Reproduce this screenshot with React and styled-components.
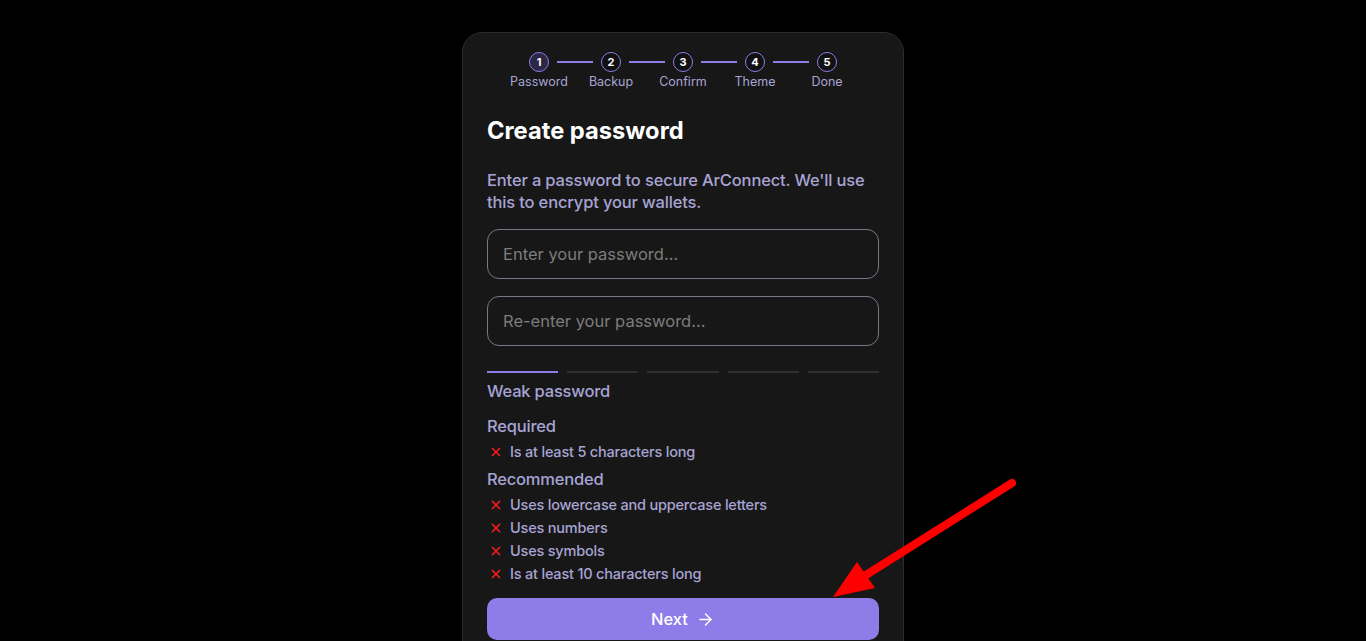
import React from "react";
import styled, { createGlobalStyle } from "styled-components";
import { ArrowRight } from "lucide-react";

const GlobalStyle = createGlobalStyle`
  html, body {
    margin: 0;
    padding: 0;
    background: #000;
  }
  body {
    font-family: Inter, "Noto Sans", sans-serif;
  }
`;

const Page = styled.div`
  position: relative;
  width: 100vw;
  min-height: 855px;
  padding-top: 32px;
  box-sizing: border-box;
  display: flex;
  justify-content: center;
  align-items: flex-start;
`;

const Card = styled.div`
  width: 442px;
  box-sizing: border-box;
  background: #171717;
  border: 1px solid #2c2c2c;
  border-radius: 20px;
  padding: 19px 24px 140px;
  display: flex;
  flex-direction: column;
`;

const Steps = styled.div`
  display: flex;
  flex-direction: column;
  align-items: center;
`;

const StepRow = styled.div`
  display: flex;
  align-items: center;
`;

const Circle = styled.div`
  width: 20px;
  height: 20px;
  box-sizing: border-box;
  border-radius: 50%;
  border: 1.5px solid #8e7de8;
  background: ${({ $active }) => ($active ? "#2c2744" : "#111")};
  color: #fff;
  font-size: 11px;
  font-weight: 700;
  display: flex;
  align-items: center;
  justify-content: center;
`;

const StepLine = styled.div`
  width: 36px;
  height: 2px;
  margin: 0 8px;
  background: #8e7de8;
`;

const Labels = styled.div`
  display: grid;
  grid-template-columns: repeat(5, 72px);
  margin-top: 2px;
`;

const Label = styled.span`
  text-align: center;
  font-size: 12.5px;
  line-height: 16px;
  color: #a7a4d4;
`;

const Title = styled.h1`
  margin: 26px 0 0;
  font-size: 23.7px;
  line-height: 30px;
  font-weight: 700;
  color: #fff;
`;

const Lead = styled.p`
  margin: 23px 0 0;
  font-size: 16.5px;
  line-height: 22px;
  letter-spacing: -0.15px;
  font-weight: 500;
  color: #a7a4d4;
`;

const Input = styled.input`
  display: block;
  width: 100%;
  height: 50px;
  box-sizing: border-box;
  margin-top: ${({ $gap }) => $gap}px;
  padding: 0 15px;
  border: 1px solid #7a7787;
  border-radius: 12px;
  background: transparent;
  font-family: inherit;
  font-size: 16.5px;
  color: #fff;
  outline: none;
  &::placeholder {
    color: #7c7c7c;
  }
`;

const Bars = styled.div`
  display: grid;
  grid-template-columns: repeat(5, 1fr);
  gap: 9px;
  margin-top: 25px;
`;

const Bar = styled.div`
  height: 2px;
  background: ${({ $on }) => ($on ? "#8e7de8" : "#2f2f2f")};
`;

const Heading = styled.div`
  margin-top: ${({ $gap }) => $gap}px;
  font-size: 16.5px;
  line-height: 22px;
  letter-spacing: -0.2px;
  font-weight: 500;
  color: #a7a4d4;
`;

const Checks = styled.ul`
  list-style: none;
  margin: 5px 0 0;
  padding: 0;
  display: flex;
  flex-direction: column;
  gap: 3px;
`;

const Check = styled.li`
  display: flex;
  align-items: center;
  gap: 8px;
  padding-left: 3px;
  font-size: 14.5px;
  line-height: 20px;
  letter-spacing: -0.2px;
  font-weight: 500;
  color: #a7a4d4;
`;

const Button = styled.button`
  margin-top: 14px;
  height: 42px;
  border: none;
  border-radius: 10px;
  background: #8e7de8;
  color: #fff;
  font-family: inherit;
  font-size: 16.5px;
  font-weight: 500;
  display: flex;
  align-items: center;
  justify-content: center;
  gap: 8px;
  cursor: pointer;
`;

const Annotation = styled.svg`
  position: absolute;
  left: 0;
  top: 0;
  pointer-events: none;
`;

const Cross = () => (
  <svg width="12" height="12" viewBox="0 0 12 12">
    <path d="M2 2 L10 10 M10 2 L2 10" stroke="#ff1a1a" strokeWidth="1.6" />
  </svg>
);

const steps = ["Password", "Backup", "Confirm", "Theme", "Done"];
const required = ["Is at least 5 characters long"];
const recommended = [
  "Uses lowercase and uppercase letters",
  "Uses numbers",
  "Uses symbols",
  "Is at least 10 characters long",
];

const App = () => {
  return (
    <>
      <GlobalStyle />
      <Page>
        <Card>
          <Steps>
            <StepRow>
              {steps.map((s, i) => (
                <React.Fragment key={s}>
                  <Circle $active={i === 0}>{i + 1}</Circle>
                  {i < steps.length - 1 && <StepLine />}
                </React.Fragment>
              ))}
            </StepRow>
            <Labels>
              {steps.map((s) => (
                <Label key={s}>{s}</Label>
              ))}
            </Labels>
          </Steps>

          <Title>Create password</Title>
          <Lead>
            Enter a password to secure ArConnect. We'll use this to encrypt
            your wallets.
          </Lead>

          <Input type="password" placeholder="Enter your password..." $gap={16} />
          <Input type="password" placeholder="Re-enter your password..." $gap={17} />

          <Bars>
            {[0, 1, 2, 3, 4].map((n) => (
              <Bar key={n} $on={n === 0} />
            ))}
          </Bars>

          <Heading $gap={7}>Weak password</Heading>
          <Heading $gap={13}>Required</Heading>
          <Checks>
            {required.map((r) => (
              <Check key={r}>
                <Cross />
                {r}
              </Check>
            ))}
          </Checks>
          <Heading $gap={6}>Recommended</Heading>
          <Checks>
            {recommended.map((r) => (
              <Check key={r}>
                <Cross />
                {r}
              </Check>
            ))}
          </Checks>

          <Button>
            Next <ArrowRight size={19} strokeWidth={1.8} />
          </Button>
        </Card>

        <Annotation width="1100" height="700">
          <line
            x1="1012"
            y1="483"
            x2="858"
            y2="580"
            stroke="#ff0000"
            strokeWidth="8"
            strokeLinecap="round"
          />
          <polygon points="833,597 857,562 875,588" fill="#ff0000" />
        </Annotation>
      </Page>
    </>
  );
};

export default App;
